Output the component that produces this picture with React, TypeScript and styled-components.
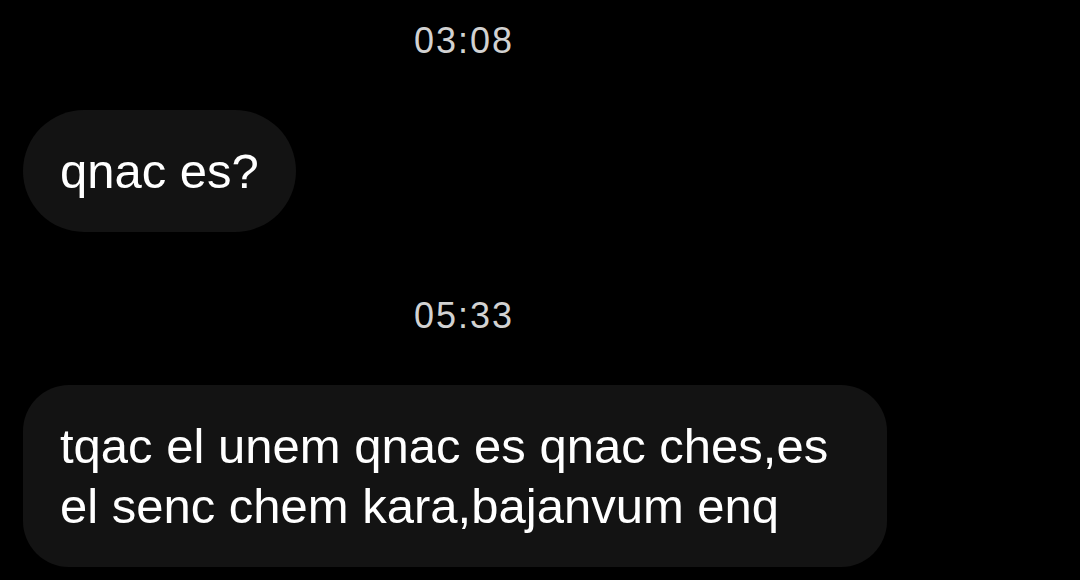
import React from "react";
import styled, { createGlobalStyle } from "styled-components";

const Global = createGlobalStyle`
  html, body {
    margin: 0;
    padding: 0;
    background: #000;
  }
  body {
    font-family: "Liberation Sans", Arial, sans-serif;
    -webkit-font-smoothing: antialiased;
  }
`;

const Thread = styled.div`
  width: 905px;
  padding: 19px 0 0 23px;
  display: flex;
  flex-direction: column;
  gap: 62px;
  background: #000;
  min-height: 580px;
  box-sizing: border-box;
`;

const Section = styled.section`
  display: flex;
  flex-direction: column;
  align-items: flex-start;
  gap: 47px;
`;

const Timestamp = styled.div`
  align-self: stretch;
  text-align: center;
  color: #d2d2d2;
  font-size: 36px;
  line-height: 44px;
  letter-spacing: 2px;
`;

const Bubble = styled.div<{ $wide?: boolean }>`
  background: #131313;
  color: #fff;
  font-size: 49px;
  line-height: 60px;
  padding: 31px 37px;
  border-radius: ${(p) => (p.$wide ? "46px" : "61px")};
  max-width: 864px;
  box-sizing: border-box;
  ${(p) => (p.$wide ? "width: 864px;" : "")}
`;

const messages = [
  { time: "03:08", text: "qnac es?", wide: false },
  {
    time: "05:33",
    text: "tqac el unem qnac es qnac ches,es el senc chem kara,bajanvum enq",
    wide: true,
  },
];

export default function App() {
  return (
    <>
      <Global />
      <Thread>
        {messages.map((m) => (
          <Section key={m.time}>
            <Timestamp>{m.time}</Timestamp>
            <Bubble $wide={m.wide}>{m.text}</Bubble>
          </Section>
        ))}
      </Thread>
    </>
  );
}
